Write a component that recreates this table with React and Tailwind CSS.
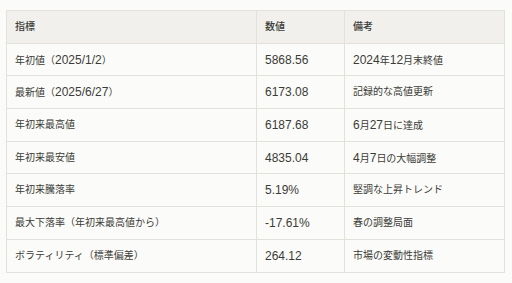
import React from "react";

const rows = [
  ["年初値（2025/1/2）", "5868.56", "2024年12月末終値"],
  ["最新値（2025/6/27）", "6173.08", "記録的な高値更新"],
  ["年初来最高値", "6187.68", "6月27日に達成"],
  ["年初来最安値", "4835.04", "4月7日の大幅調整"],
  ["年初来騰落率", "5.19%", "堅調な上昇トレンド"],
  ["最大下落率（年初来最高値から）", "-17.61%", "春の調整局面"],
  ["ボラティリティ（標準偏差）", "264.12", "市場の変動性指標"],
];

// latin runs a bit larger than the CJK glyphs, like the original font pairing
function Mixed({ text }) {
  return text.split(/([\x00-\x7F]+)/).map((part, i) =>
    /^[\x00-\x7F]+$/.test(part) ? (
      <span key={i} className="text-[12px]">{part}</span>
    ) : (
      part
    )
  );
}

export default function App() {
  return (
    <div
      className="w-[512px] h-[283px] bg-[#fbfbf9] pt-[10px] pl-[6px] text-[#3b3b38]"
      style={{ fontFamily: '"Liberation Sans", "Noto Sans CJK JP", sans-serif' }}
    >
      <table className="w-[498px] table-fixed border-collapse text-[10px] leading-none">
        <colgroup>
          <col className="w-[250px]" />
          <col className="w-[88px]" />
          <col className="w-[160px]" />
        </colgroup>
        <thead>
          <tr className="h-[32.7px] bg-[#f1f0ec]">
            <th className="border border-[#e2e1dc] px-2 text-left font-medium">指標</th>
            <th className="border border-[#e2e1dc] px-2 text-left font-medium">数値</th>
            <th className="border border-[#e2e1dc] px-2 text-left font-medium">備考</th>
          </tr>
        </thead>
        <tbody>
          {rows.map((r, i) => (
            <tr key={i} className="h-[32.7px]">
              {r.map((cell, j) => (
                <td key={j} className="border border-[#e2e1dc] px-2">
                  <Mixed text={cell} />
                </td>
              ))}
            </tr>
          ))}
        </tbody>
      </table>
    </div>
  );
}
